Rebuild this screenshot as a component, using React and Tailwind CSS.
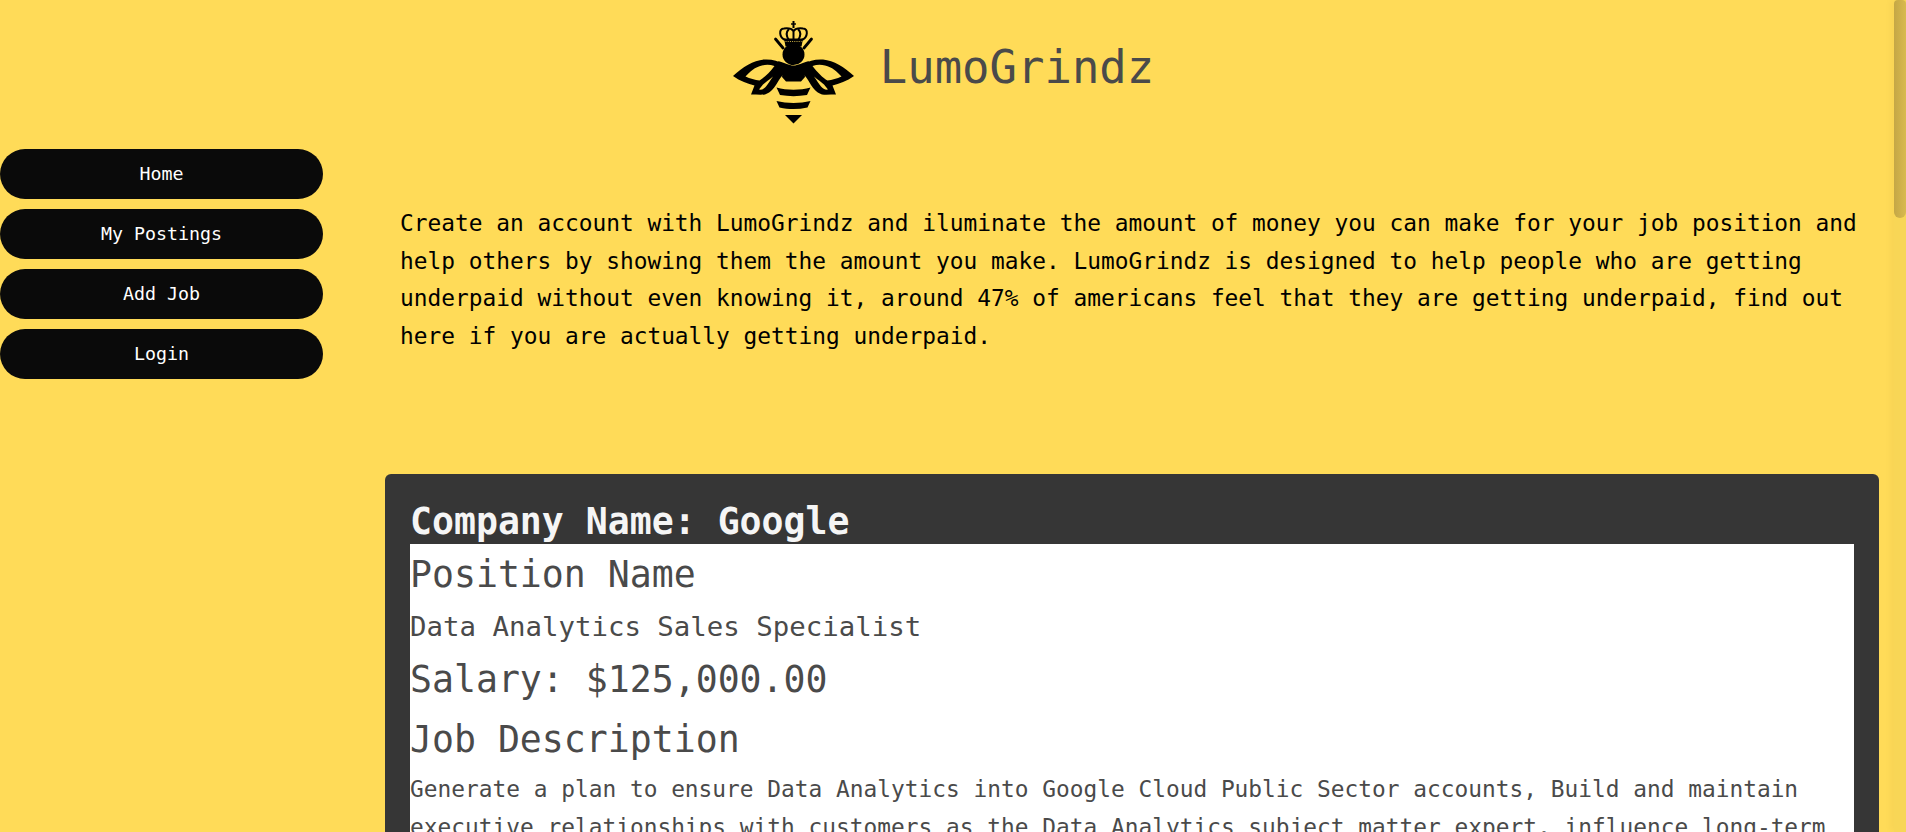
import React from 'react';

const NAV_ITEMS = ['Home', 'My Postings', 'Add Job', 'Login'];

function BeeWing() {
    return (
        <g>
            <path
                fillRule="evenodd"
                d="M734 75 C744 66 754 59.5 765 58.5 C773 58 779 60 785 63 L789 70 C784 73 782 76 780 79 C776 86 772 91.5 766 93.5 C762 94 757 93.5 752 93.5 L755.5 84.5 C749 83 741 80 734 75 Z M746.5 75.5 C751 77.5 756 79 760.5 79.5 C765 77 771 71 775.5 65 C771 63.5 767 63.5 763 64.5 C756 66 751 70.5 746.5 75.5 Z M760 88.5 C762.5 89 765 88 767 85.5 C769 83 771 80 774 75.5 C770 79 766 81.5 764 83.5 Z"
            />
        </g>
    );
}

function BeeLogo() {
    return (
        <svg viewBox="734 18 121 106" className="h-[106px] w-[121px] shrink-0" fill="#000" aria-label="LumoGrindz logo">
            <BeeWing />
            <g transform="matrix(-1 0 0 1 1589 0)">
                <BeeWing />
            </g>
            {/* crown */}
            <path d="M794.5 20 v7" stroke="#000" strokeWidth="2" />
            <path d="M792 23 h5" stroke="#000" strokeWidth="1.4" />
            <g fill="none" stroke="#000" strokeWidth="2">
                <path d="M786 39 C780 36 779.5 28 785 27.5 C789 27 793 28 794.5 30 C796 28 800 27 804 27.5 C809.5 28 809 36 803 39" />
                <path d="M790 39 C787 35 787 31 790 28 M799 39 C802 35 802 31 799 28" />
                <path d="M794.5 30 V39" />
            </g>
            <path d="M785 37.5 H804 L802.5 45.5 H786.5 Z" />
            <path d="M786.5 40.5 H802.5" stroke="#ffdb58" strokeWidth="0.8" strokeDasharray="1 1.2" />
            {/* antennae */}
            <path d="M776.5 38 L784 47 M812.5 38 L805 47" stroke="#000" strokeWidth="2.8" strokeLinecap="round" />
            {/* head + body */}
            <ellipse cx="794.5" cy="53.5" rx="11" ry="10.5" />
            <path d="M779 60 C786 62 790 64.5 794.5 64.5 C799 64.5 803 62 810 60 L805 69 L806 76 L802 80.5 H787 L783 76 L784 69 Z" />
            <path d="M777.5 86.5 C788 89.5 801 89.5 811.5 86.5 L808 94 C799 95.5 790 95.5 781 94 Z" />
            <path d="M777.5 100 C788 102.5 801 102.5 811.5 100 L808.5 106.5 C799 108.5 790 108.5 780.5 106.5 Z" />
            <path d="M786 114 H803 L794.5 122.5 Z" />
        </svg>
    );
}

export default function App() {
    return (
        <div className="flex h-[832px] overflow-hidden bg-[#ffdb58] font-['DejaVu_Sans_Mono',monospace]">
            <div className="min-w-0 flex-1 overflow-hidden">
                <header className="flex h-[149px] items-start justify-center pr-[7px] pt-[19px]">
                    <BeeLogo />
                    <h1 className="ml-[26px] mt-[21px] text-[45.6px] leading-[56px] text-[#4a4a4a]">LumoGrindz</h1>
                </header>

                <div className="flex">
                    <aside className="w-[370px] shrink-0">
                        <nav className="flex w-[323px] flex-col gap-[10px]">
                            {NAV_ITEMS.map((item) => (
                                <a
                                    key={item}
                                    href="#"
                                    className="flex h-[50px] items-center justify-center rounded-[25px] bg-[#0a0a0a] text-[18.3px] text-white"
                                >
                                    {item}
                                </a>
                            ))}
                        </nav>
                    </aside>

                    <main className="min-w-0 flex-1 px-[15px]">
                        <p className="mt-[56px] px-[15px] text-[22.84px] leading-[37.5px] text-black">
                            Create an account with LumoGrindz and iluminate the amount of money you can make for your job position and help others by showing them the amount you make. LumoGrindz is designed to help people who are getting underpaid without even knowing it, around 47% of americans feel that they are getting underpaid, find out here if you are actually getting underpaid.
                        </p>

                        <section className="mt-[119px] rounded-md bg-[#363636] px-[25px] pb-[25px] pt-[25px]">
                            <h2 className="text-[36.5px] font-bold leading-[45px] text-[#f5f5f5]">Company Name: Google</h2>
                            <div className="bg-white text-[#4a4a4a]">
                                <h3 className="text-[36.5px] leading-[61px]">Position Name</h3>
                                <p className="text-[27.4px] leading-[44px]">Data Analytics Sales Specialist</p>
                                <h3 className="text-[36.5px] leading-[62px]">Salary: $125,000.00</h3>
                                <h3 className="text-[36.5px] leading-[58px]">Job Description</h3>
                                <p className="mt-[2px] text-[22.84px] leading-[37.5px]">
                                    Generate a plan to ensure Data Analytics into Google Cloud Public Sector accounts, Build and maintain executive relationships with customers as the Data Analytics subject matter expert, influence long-term
                                </p>
                            </div>
                        </section>
                    </main>
                </div>
            </div>

            {/* scrollbar */}
            <div className="w-3 shrink-0 bg-[#f8d656] shadow-[-4px_0_6px_rgba(0,0,0,0.03)]">
                <div className="h-[218px] rounded-b-md rounded-t-sm bg-gradient-to-r from-[#c4a746] to-[#d9ba4e]" />
            </div>
        </div>
    );
}
